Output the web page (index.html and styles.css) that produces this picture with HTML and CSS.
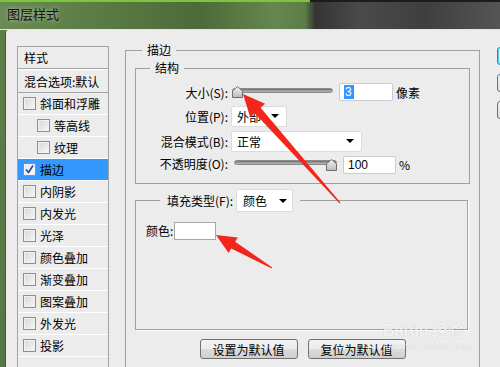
FILE: index.html
```html
<!DOCTYPE html>
<html>
<head>
  <meta charset="UTF-8">
  <title>图层样式</title>
  <link rel="stylesheet" href="styles.css">
</head>
<body>
  <div class="window">
    <div class="titlebar"><span class="title">图层样式</span></div>
    <div class="dialog">
      <ul class="styles-list">
        <li class="head">样式</li>
        <li class="head second">混合选项:默认</li>
        <li><span class="cb"></span>斜面和浮雕</li>
        <li class="sub"><span class="cb"></span>等高线</li>
        <li class="sub"><span class="cb"></span>纹理</li>
        <li class="active"><span class="cb checked"><svg viewBox="0 0 11 11" width="11" height="11"><path d="M2 5.5 L4.5 8.5 L9 1.5" fill="none" stroke="#2b3fa8" stroke-width="1.6"/></svg></span>描边</li>
        <li><span class="cb"></span>内阴影</li>
        <li><span class="cb"></span>内发光</li>
        <li><span class="cb"></span>光泽</li>
        <li><span class="cb"></span>颜色叠加</li>
        <li><span class="cb"></span>渐变叠加</li>
        <li><span class="cb"></span>图案叠加</li>
        <li><span class="cb"></span>外发光</li>
        <li><span class="cb"></span>投影</li>
      </ul>

      <div class="main">
        <fieldset class="group outer">
          <legend>描边</legend>

          <fieldset class="group structure">
            <legend>结构</legend>
            <div class="form-grid">
              <label class="row-1">大小(S):</label>
              <div class="control row-1">
                <div class="slider">
                  <div class="track"></div>
                  <svg class="thumb at-min" viewBox="0 0 11 12" width="11" height="12"><defs><linearGradient id="tg1" x1="0" y1="0" x2="0" y2="1"><stop offset="0" stop-color="#f4f4f4"/><stop offset="1" stop-color="#b9b9b9"/></linearGradient></defs><path d="M0.5 11.5 V5 L5.5 0.5 L10.5 5 V11.5 Z" fill="url(#tg1)" stroke="#6f6f6f"/></svg>
                </div>
                <div class="num"><span class="sel">3</span><span class="caret"></span></div>
                <span class="unit">像素</span>
              </div>

              <label class="row-2">位置(P):</label>
              <div class="control row-2">
                <div class="select narrow"><span>外部</span><i class="arrow"></i></div>
              </div>

              <label class="row-3">混合模式(B):</label>
              <div class="control row-3">
                <div class="select wide"><span>正常</span><i class="arrow"></i></div>
              </div>

              <label class="row-4">不透明度(O):</label>
              <div class="control row-4">
                <div class="slider long">
                  <div class="track"></div>
                  <svg class="thumb at-max" viewBox="0 0 11 12" width="11" height="12"><defs><linearGradient id="tg2" x1="0" y1="0" x2="0" y2="1"><stop offset="0" stop-color="#f4f4f4"/><stop offset="1" stop-color="#b9b9b9"/></linearGradient></defs><path d="M0.5 11.5 V5 L5.5 0.5 L10.5 5 V11.5 Z" fill="url(#tg2)" stroke="#6f6f6f"/></svg>
                </div>
                <div class="num">100</div>
                <span class="unit">%</span>
              </div>
            </div>
          </fieldset>

          <fieldset class="group fill">
            <legend>
              <span class="fill-label">填充类型(F):</span>
              <div class="select fill-select"><span>颜色</span><i class="arrow"></i></div>
            </legend>
            <div class="fill-body">
              <span>颜色:</span>
              <span class="swatch"></span>
            </div>
          </fieldset>

          <div class="actions">
            <button class="btn">设置为默认值</button>
            <button class="btn">复位为默认值</button>
          </div>
        </fieldset>
      </div>

      <div class="side">
        <button class="side-btn primary"></button>
        <button class="side-btn"></button>
        <button class="side-btn"></button>
      </div>
    </div>

    <svg class="marks" viewBox="0 0 500 367" width="500" height="367">
      <polygon points="243,94 265.1,103.8 260.6,107.7 340.4,202.6 339.6,203.4 254.6,113.1 250.1,117.1" fill="#f3261c"/>
      <polygon points="216,235 237.8,237.4 235.2,241.8 272.3,267.5 271.7,268.5 231.2,248.6 228.6,253" fill="#f3261c"/>
    </svg>

    <div class="watermark">
      <div class="wm-logo">Bai<span class="wm-du">du</span>经验</div>
      <div class="wm-url">jingyan.baidu.com</div>
    </div>
  </div>
</body>
</html>
```

FILE: styles.css
```css
* {
  box-sizing: border-box;
}
body {
  margin: 0;
  width: 500px;
  height: 367px;
  overflow: hidden;
  font-family: "Noto Sans CJK SC", "Liberation Sans", sans-serif;
  font-size: 12px;
  color: #000;
}
.window {
  position: relative;
  height: 367px;
  overflow: hidden;
  background: linear-gradient(#5e7e48, #587843);
}

/* title bar */
.titlebar {
  height: 30px;
  padding: 5px 0 0 7px;
  border-bottom: 1px solid #e4e4e4;
  background:
    linear-gradient(to right, #7cc63c 0, #7cc63c 310px, #1c1c1c 310px) top / 100% 2px no-repeat,
    linear-gradient(to right, #6b8b55 0, #577742 25%, #4d6a39 40%, #66874f 55%, #5d7d47 61%, #343434 63%, #4a4a4a 72%, #3f3f3f 85%, #555 100%);
}
.title {
  font-size: 13px;
  line-height: 18px;
  color: #111;
  text-shadow: 0 0 4px rgba(255, 255, 255, 0.6);
}

/* dialog body */
.dialog {
  display: flex;
  height: 337px;
  margin-left: 5px;
  overflow: hidden;
  background: #ececec;
  border-left: 1px solid #4d4d4d;
  border-top-left-radius: 3px;
}
.dialog > * {
  flex-shrink: 0;
}

/* styles list */
.styles-list {
  list-style: none;
  margin: 16px 0 0 11px;
  padding: 0;
  width: 92px;
  height: 400px;
  border: 1px solid #a3a3a3;
  border-bottom: 0;
}
.styles-list li {
  display: flex;
  align-items: center;
  height: 22px;
  padding-left: 5px;
  border-bottom: 1px solid #fff;
  white-space: nowrap;
}
.styles-list li.head {
  padding-left: 6px;
  border-bottom: 1px solid #a3a3a3;
}
.styles-list li.second {
  height: 24px;
  border-top: 1px solid #fff;
}
.styles-list li.sub {
  padding-left: 19px;
}
.styles-list li.active {
  background: #3399ff;
}
.cb {
  display: inline-flex;
  align-items: center;
  justify-content: center;
  flex-shrink: 0;
  width: 13px;
  height: 13px;
  margin-right: 4px;
  border: 1px solid #8e8e8e;
  background: linear-gradient(135deg, #d6d6d6, #f8f8f8);
  box-shadow: inset 0 0 0 1px #f2f2f2;
}
.cb.checked {
  background: linear-gradient(135deg, #e2e2e2, #ffffff);
}

/* main column */
.main {
  margin-left: 16px;
  padding-top: 12px;
}
.group {
  margin: 0;
  padding: 0;
  min-width: 0;
  border: 1px solid #a0a0a0;
}
.group legend {
  padding: 0 5px;
  line-height: 16px;
}
.outer {
  width: 355px;
  height: 360px;
  padding: 0 9px;
  border-bottom: 0;
}
.outer > legend {
  margin-left: 7px;
}
.structure {
  width: 335px;
  margin-top: 2px;
  padding: 5px 0 10px;
}
.structure > legend {
  margin-left: 14px;
}
.form-grid {
  display: grid;
  grid-template-columns: 92px 1fr;
  grid-template-rows: 22px 26px 24px 20px;
  column-gap: 3px;
  align-items: center;
}
.form-grid label {
  text-align: right;
  white-space: nowrap;
}
.control {
  display: flex;
  align-items: center;
}

/* sliders */
.slider {
  position: relative;
  width: 102px;
  height: 18px;
  padding-left: 1px;
  display: flex;
  align-items: center;
}
.slider.long {
  width: 106px;
  padding-left: 3px;
}
.track {
  flex: 1;
  height: 5px;
  margin-top: -3px;
  border: 1px solid #8a8a8a;
  border-radius: 3px;
  background: linear-gradient(#6f6f6f, #bdbdbd);
}
.slider.long .track {
  margin-top: -1px;
}
.thumb {
  position: absolute;
  top: 3px;
}
.thumb.at-min {
  left: 1px;
}
.thumb.at-max {
  top: 5px;
  right: 0;
}
.num {
  display: flex;
  align-items: center;
  width: 54px;
  height: 18px;
  margin-left: 6px;
  padding-left: 4px;
  background: #fff;
  border: 1px solid #c6ccd4;
  border-radius: 2px;
  font-family: "Liberation Sans", sans-serif;
  font-size: 12px;
}
.row-4 .num {
  width: 53px;
  margin-top: 4px;
}
.sel {
  background: #3399ff;
  color: #fff;
  padding: 0 1px;
  line-height: 14px;
}
.caret {
  width: 1px;
  height: 14px;
  background: #c8641e;
}
.unit {
  margin-left: 3px;
}
.row-4 .unit {
  margin-top: 2px;
}

/* select boxes */
.select {
  display: flex;
  align-items: center;
  justify-content: space-between;
  height: 21px;
  padding: 0 7px 0 5px;
  background: #fff;
  border: 1px solid #dcdcdc;
  border-radius: 2px;
}
.select.narrow {
  width: 56px;
}
.select.wide {
  width: 131px;
}
.arrow {
  width: 0;
  height: 0;
  border-left: 4px solid transparent;
  border-right: 4px solid transparent;
  border-top: 4px solid #000;
}

/* fill group */
.fill {
  width: 333px;
  margin-top: 5px;
  box-shadow: 1px 1px 0 #fff;
}
.fill > legend {
  display: flex;
  align-items: center;
  margin-left: 24px;
  padding: 0 7px;
}
.fill-label {
  margin-right: 3px;
}
.select.fill-select {
  width: 57px;
  height: 23px;
  padding-left: 6px;
  padding-right: 5px;
}
.fill-body {
  display: flex;
  align-items: flex-start;
  height: 117px;
  padding: 10px 0 0 10px;
}
.fill-body span:first-child {
  line-height: 18px;
  margin-right: 1px;
}
.swatch {
  width: 42px;
  height: 18px;
  background: #fff;
  border: 1px solid #a8a8a8;
}

/* buttons */
.actions {
  display: flex;
  justify-content: center;
  gap: 10px;
  margin-top: 9px;
}
.btn {
  width: 98px;
  height: 20px;
  padding: 0;
  font-family: "Noto Sans CJK SC", sans-serif;
  font-size: 12px;
  color: #000;
  border: 1px solid #707070;
  border-radius: 3px;
  background: linear-gradient(#f3f3f3, #ebebeb 50%, #dcdcdc 50%, #cfcfcf);
}
.side {
  display: flex;
  flex-direction: column;
  gap: 9px;
  margin-left: 17px;
  padding-top: 17px;
}
.side-btn {
  width: 60px;
  height: 18px;
  border: 1px solid #707070;
  border-radius: 3px;
  background: linear-gradient(#f3f3f3, #dcdcdc);
}
.side-btn.primary {
  border-color: #3c7fb1;
  box-shadow: inset 0 0 0 1px #5fd0f5;
}

/* annotation overlay */
.marks {
  position: absolute;
  left: 0;
  top: 0;
  pointer-events: none;
}
.watermark {
  position: absolute;
  left: 383px;
  top: 322px;
  color: rgba(255, 255, 255, 0.8);
  text-shadow: 0 0 1px rgba(0, 0, 0, 0.2);
  pointer-events: none;
}
.wm-logo {
  font-family: "Liberation Sans", "Noto Sans CJK SC", sans-serif;
  font-size: 16px;
  font-weight: bold;
  line-height: 18px;
}
.wm-du {
  margin: 0 3px 0 1px;
}
.wm-url {
  font-family: "Liberation Sans", sans-serif;
  font-size: 10px;
  line-height: 14px;
  letter-spacing: 0.5px;
}
```
